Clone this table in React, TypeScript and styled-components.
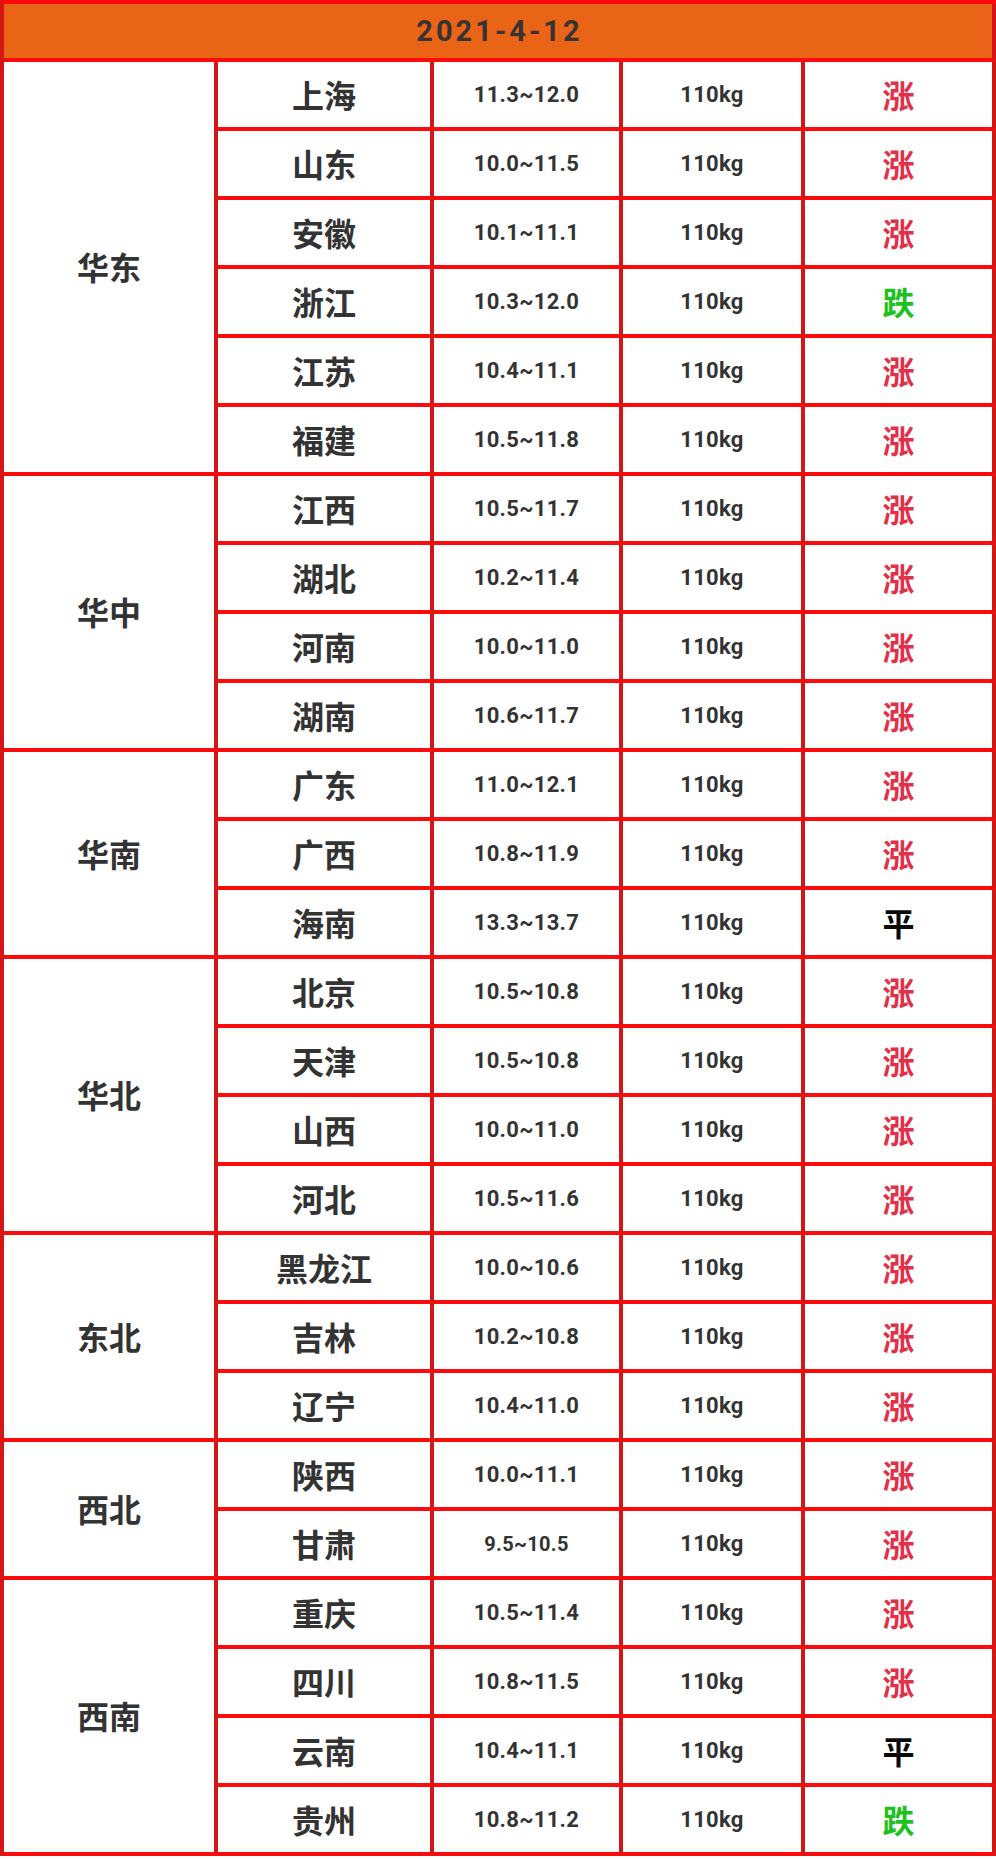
import React from "react";
import styled, { createGlobalStyle } from "styled-components";

const Global = createGlobalStyle`
  html, body { margin: 0; padding: 0; background: #ffffff; }
  body { font-family: Roboto, "Noto Sans CJK SC", sans-serif; }
`;

const HLINE = "#ff0a0a";
const VLINE = "#d41616";

const Sheet = styled.div`
  display: grid;
  grid-template-columns: 214px 216px 189px 182px 191px;
  grid-template-rows: 58px;
  grid-auto-rows: 69px;
  width: 996px;
  box-sizing: border-box;
  border-top: 4px solid ${HLINE};
  border-left: 4px solid ${VLINE};
  background: #ffffff;
`;

const Cell = styled.div<{ $col: number }>`
  grid-column: ${(p) => p.$col};
  box-sizing: border-box;
  border-right: 4px solid ${VLINE};
  border-bottom: 4px solid ${HLINE};
  display: flex;
  align-items: center;
  justify-content: center;
  color: #333333;
  background: #ffffff;
`;

const TitleCell = styled.div`
  grid-column: 1 / -1;
  box-sizing: border-box;
  border-right: 4px solid ${VLINE};
  border-bottom: 4px solid ${HLINE};
  background: #e96417;
  display: flex;
  align-items: center;
  justify-content: center;
  padding-left: 3px;
  font-family: Roboto, sans-serif;
  font-weight: 700;
  font-size: 29px;
  letter-spacing: 3px;
  color: #383330;
`;

const RegionCell = styled(Cell)<{ $span: number }>`
  grid-row: span ${(p) => p.$span};
  font-family: "Noto Sans CJK SC", sans-serif;
  font-weight: 700;
  font-size: 32px;
  padding-bottom: 2px;
`;

const CityCell = styled(Cell)`
  font-family: "Noto Sans CJK SC", sans-serif;
  font-weight: 700;
  font-size: 32px;
  padding-bottom: 2px;
`;

const RangeCell = styled(Cell)<{ $small?: boolean }>`
  font-family: Roboto, sans-serif;
  font-weight: 700;
  font-size: ${(p) => (p.$small ? "20px" : "22px")};
  letter-spacing: 0.3px;
`;

const WeightCell = styled(Cell)`
  font-family: Roboto, sans-serif;
  font-weight: 700;
  font-size: 22px;
  letter-spacing: 0.3px;
`;

type Trend = "涨" | "跌" | "平";

const trendColor: Record<Trend, string> = {
  涨: "#e3304a",
  跌: "#1ec21e",
  平: "#0a0a0a",
};

const TrendCell = styled(Cell)<{ $trend: Trend }>`
  font-family: "Noto Sans CJK SC", sans-serif;
  font-weight: 700;
  font-size: 32px;
  padding-bottom: 2px;
  color: ${(p) => trendColor[p.$trend]};
`;

const BottomGap = styled.div`
  height: 3px;
`;

type Row = { city: string; range: string; trend: Trend };
type Group = { region: string; rows: Row[] };

const data: Group[] = [
  {
    region: "华东",
    rows: [
      { city: "上海", range: "11.3~12.0", trend: "涨" },
      { city: "山东", range: "10.0~11.5", trend: "涨" },
      { city: "安徽", range: "10.1~11.1", trend: "涨" },
      { city: "浙江", range: "10.3~12.0", trend: "跌" },
      { city: "江苏", range: "10.4~11.1", trend: "涨" },
      { city: "福建", range: "10.5~11.8", trend: "涨" },
    ],
  },
  {
    region: "华中",
    rows: [
      { city: "江西", range: "10.5~11.7", trend: "涨" },
      { city: "湖北", range: "10.2~11.4", trend: "涨" },
      { city: "河南", range: "10.0~11.0", trend: "涨" },
      { city: "湖南", range: "10.6~11.7", trend: "涨" },
    ],
  },
  {
    region: "华南",
    rows: [
      { city: "广东", range: "11.0~12.1", trend: "涨" },
      { city: "广西", range: "10.8~11.9", trend: "涨" },
      { city: "海南", range: "13.3~13.7", trend: "平" },
    ],
  },
  {
    region: "华北",
    rows: [
      { city: "北京", range: "10.5~10.8", trend: "涨" },
      { city: "天津", range: "10.5~10.8", trend: "涨" },
      { city: "山西", range: "10.0~11.0", trend: "涨" },
      { city: "河北", range: "10.5~11.6", trend: "涨" },
    ],
  },
  {
    region: "东北",
    rows: [
      { city: "黑龙江", range: "10.0~10.6", trend: "涨" },
      { city: "吉林", range: "10.2~10.8", trend: "涨" },
      { city: "辽宁", range: "10.4~11.0", trend: "涨" },
    ],
  },
  {
    region: "西北",
    rows: [
      { city: "陕西", range: "10.0~11.1", trend: "涨" },
      { city: "甘肃", range: "9.5~10.5", trend: "涨" },
    ],
  },
  {
    region: "西南",
    rows: [
      { city: "重庆", range: "10.5~11.4", trend: "涨" },
      { city: "四川", range: "10.8~11.5", trend: "涨" },
      { city: "云南", range: "10.4~11.1", trend: "平" },
      { city: "贵州", range: "10.8~11.2", trend: "跌" },
    ],
  },
];

export default function App() {
  return (
    <>
      <Global />
      <Sheet>
        <TitleCell>2021-4-12</TitleCell>
        {data.map((g) => (
          <React.Fragment key={g.region}>
            <RegionCell $col={1} $span={g.rows.length}>
              {g.region}
            </RegionCell>
            {g.rows.map((r) => (
              <React.Fragment key={r.city}>
                <CityCell $col={2}>{r.city}</CityCell>
                <RangeCell $col={3} $small={r.range.length < 9}>
                  {r.range}
                </RangeCell>
                <WeightCell $col={4}>110kg</WeightCell>
                <TrendCell $col={5} $trend={r.trend}>
                  {r.trend}
                </TrendCell>
              </React.Fragment>
            ))}
          </React.Fragment>
        ))}
      </Sheet>
      <BottomGap />
    </>
  );
}
